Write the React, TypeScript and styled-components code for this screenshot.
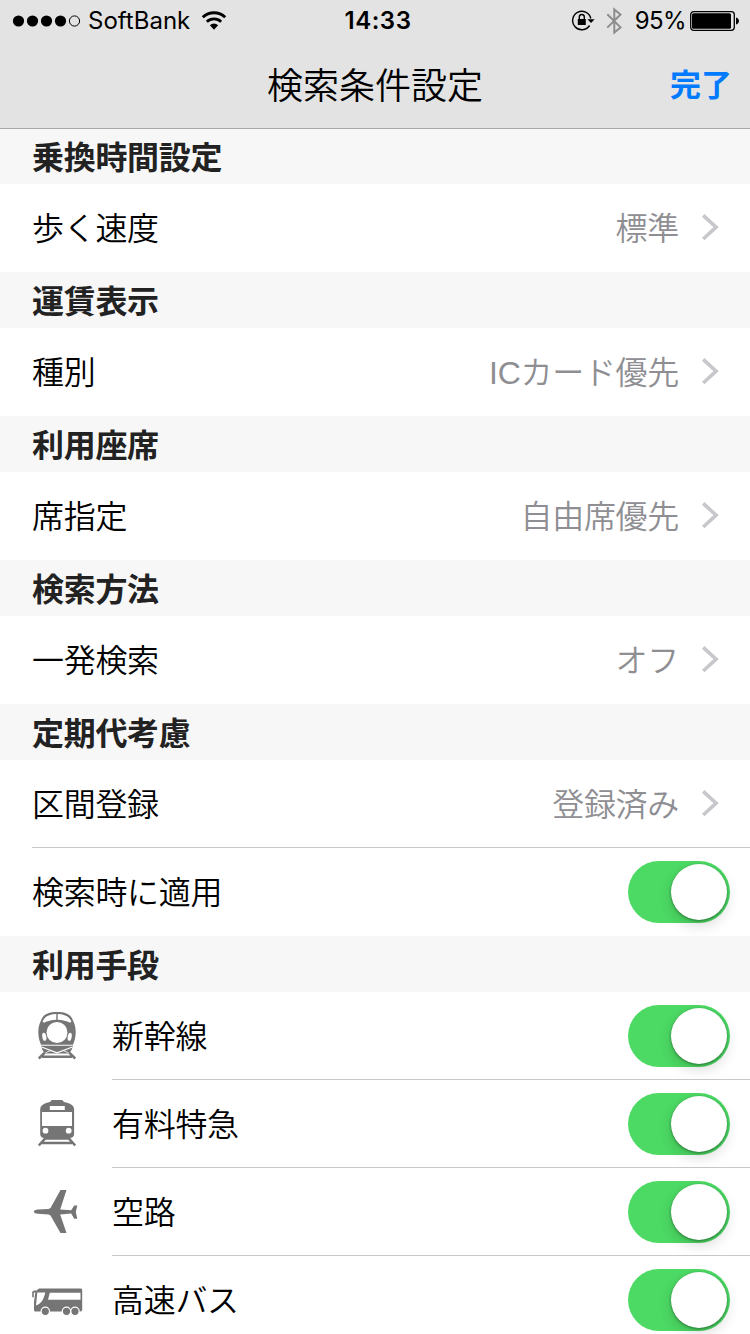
import React from "react";
import styled, { createGlobalStyle } from "styled-components";

const Global = createGlobalStyle`
  * { box-sizing: border-box; }
  html, body { margin: 0; padding: 0; background: #fff; }
  body {
    width: 750px;
    height: 1334px;
    overflow: hidden;
    font-family: Inter, "Noto Sans CJK JP", sans-serif;
    color: #000;
  }
`;

const Screen = styled.main`
  width: 750px;
  height: 1334px;
  overflow: hidden;
  display: flex;
  flex-direction: column;
  background: #fff;
`;

const Header = styled.header`
  flex: none;
  height: 129px;
  background: #e3e3e3;
  border-bottom: 1px solid #a9a9a9;
`;

const StatusBar = styled.div`
  height: 40px;
  display: grid;
  grid-template-columns: 1fr auto 1fr;
  align-items: center;
  padding: 0 11px 0 12px;
  font-size: 24px;
  line-height: 40px;
`;

const StatusGroup = styled.div<{ $end?: boolean }>`
  display: flex;
  align-items: center;
  height: 40px;
  justify-content: ${(p) => (p.$end ? "flex-end" : "flex-start")};
`;

const Carrier = styled.span`
  flex: none;
  margin: 1px 0 0 6px;
  width: 113px;
  font-size: 24px;
  letter-spacing: 0;
  white-space: nowrap;
`;

const Clock = styled.span`
  margin: 1px 0 0 5px;
  font-weight: 600;
  font-size: 24px;
  letter-spacing: 0.5px;
`;

const Percent = styled.span`
  margin: 1px 4px 0 12px;
  font-size: 24px;
  letter-spacing: -0.6px;
`;

const NavBar = styled.div`
  height: 88px;
  display: grid;
  grid-template-columns: 1fr auto 1fr;
  align-items: center;
  padding: 0 18px 2px;
`;

const Title = styled.h1`
  grid-column: 2;
  margin: 0;
  font-family: "Noto Sans CJK JP", sans-serif;
  font-size: 36px;
  font-weight: 350;
  line-height: 52px;
`;

const DoneButton = styled.button`
  justify-self: end;
  border: 0;
  padding: 0;
  background: none;
  color: #007aff;
  font-family: "Noto Sans CJK JP", sans-serif;
  font-size: 31px;
  font-weight: 700;
  line-height: 44px;
`;

const SectionHeader = styled.h2<{ $first?: boolean }>`
  flex: none;
  margin: 0;
  height: ${(p) => (p.$first ? 55 : 56)}px;
  padding: 0 32px;
  background: #f7f7f7;
  color: #222;
  font-family: "Noto Sans CJK JP", sans-serif;
  font-size: 32px;
  font-weight: 700;
  line-height: ${(p) => (p.$first ? 53 : 55)}px;
  letter-spacing: -0.3px;
`;

const Row = styled.div<{ $icon?: boolean }>`
  flex: none;
  height: 88px;
  display: flex;
  padding-left: ${(p) => (p.$icon ? 0 : 32)}px;
`;

const IconCell = styled.div`
  width: 112px;
  height: 88px;
  flex: none;
  svg { display: block; }
`;

const RowBody = styled.div<{ $line?: boolean; $toggle?: boolean }>`
  flex: 1;
  display: flex;
  align-items: center;
  justify-content: space-between;
  padding-right: ${(p) => (p.$toggle ? 20 : 31)}px;
  box-shadow: ${(p) => (p.$line ? "inset 0 -1px 0 #c8c7cc" : "none")};
`;

const Label = styled.span`
  margin-bottom: 4px;
  font-family: "Noto Sans CJK JP", sans-serif;
  font-size: 32px;
  font-weight: 350;
  line-height: 46px;
  letter-spacing: -0.3px;
`;

const Value = styled.span`
  display: flex;
  align-items: center;
  gap: 22px;
  color: #8e8e93;
  font-family: "Liberation Sans", "Noto Sans CJK JP", sans-serif;
  font-size: 32px;
  font-weight: 350;
  line-height: 46px;
  letter-spacing: -0.3px;
`;

const ValueText = styled.span`
  padding-top: 1px;
`;

const Switch = styled.span`
  display: flex;
  justify-content: flex-end;
  width: 102px;
  height: 62px;
  padding: 3px;
  border-radius: 31px;
  background: #4cd964;
`;

const Knob = styled.span`
  width: 56px;
  height: 56px;
  border-radius: 50%;
  background: #fff;
  box-shadow: 0 1px 3px rgba(0, 0, 0, 0.4), 0 6px 14px rgba(0, 0, 0, 0.14);
`;

const Signal = () => (
  <svg width="70" height="14" viewBox="0 0 70 14">
    {[6.5, 20.5, 34.5, 48.5].map((x) => (
      <circle key={x} cx={x} cy="7" r="5.6" />
    ))}
    <circle cx="62.5" cy="7" r="5.1" fill="none" stroke="#000" strokeWidth="1" />
  </svg>
);

const Wifi = () => (
  <svg width="26" height="20" viewBox="0 0 26 20" fill="none" stroke="#000">
    <path d="M1.8 6.3a16 16 0 0 1 22.4 0" strokeWidth="2.9" />
    <path d="M5.8 10.7a10.4 10.4 0 0 1 14.4 0" strokeWidth="2.7" />
    <path d="M13 18.700l-4.100-4.500a6 6 0 0 1 8.200 0z" fill="#000" stroke="none" />
  </svg>
);

const RotationLock = () => (
  <svg width="24" height="22" viewBox="0 0 24 22" fill="none" stroke="#000">
    <path d="M18.600 15.500A9.200 9.200 0 1 1 19.800 8.500" strokeWidth="1.400" />
    <path d="M16.400 9.200h7.200l-3.600 3.900z" fill="#000" stroke="none" />
    <rect x="6.800" y="8.900" width="8" height="6" rx=".5" fill="#000" stroke="none" />
    <path d="M8.300 9.200V7a2.500 2.500 0 0 1 5 0v2.200" strokeWidth="1.400" />
  </svg>
);

const BluetoothIcon = styled.svg`
  margin-left: 11px;
`;

const Bluetooth = () => (
  <BluetoothIcon width="17" height="28" viewBox="0 0 17 28" fill="none" stroke="#8d8d8d" strokeWidth="2">
    <path d="M1.300 7.300l13.200 13.100-6.200 5.200V2.400l6.200 5.100L1.300 20.600" />
  </BluetoothIcon>
);

const Battery = () => (
  <svg width="49" height="20" viewBox="0 0 49 20">
    <rect x=".7" y=".7" width="43.600" height="18.600" rx="3" fill="none" stroke="#000" strokeWidth="1.300" />
    <rect x="2" y="2.200" width="39" height="15.600" rx="1.500" />
    <path d="M46 6.500c4 1.200 4 5.800 0 7z" />
  </svg>
);

const Chevron = () => (
  <svg width="18" height="28" viewBox="0 0 18 28" fill="none" stroke="#c7c7cc" strokeWidth="3.600">
    <path d="M2.200 1.400L15.100 13.200 2.200 25" />
  </svg>
);

const Shinkansen = () => (
  <svg width="112" height="88" viewBox="0 0 112 88" fill="#757575">
    <path
      fillRule="evenodd"
      d="M57 20c-9 0-14 2.600-16 8.500-1.800 4-2.700 7-2.700 11.500 0 5 1.200 9.500 2.700 12.700h32c1.500-3.200 2.700-7.700 2.700-12.700 0-4.500-.9-7.500-2.700-11.500C71 22.600 66 20 57 20zM56.300 22v5.700c-5 .2-8.800 1.200-12.400 3l-1.300-1.200c2.200-4.800 6-7.200 13.700-7.500zM57.700 22c7.700.3 11.500 2.700 13.700 7.500l-1.300 1.200c-3.600-1.800-7.400-2.800-12.400-3z"
    />
    <circle cx="57" cy="40.500" r="10.500" fill="#fff" />
    <ellipse cx="44.300" cy="44.800" rx="2" ry="4" fill="#fff" transform="rotate(-10 44.300 44.800)" />
    <ellipse cx="69.700" cy="44.800" rx="2" ry="4" fill="#fff" transform="rotate(10 69.700 44.800)" />
    <path d="M41 53.800h32l-1.200 3.500L69.500 61.500h-25l-2.300-4.200z" />
    <path d="M41.500 55l15.500 5.800L72.500 55" fill="none" stroke="#fff" strokeWidth="1.300" />
    <path d="M45.500 60.800l6-2.600M68.500 60.800l-6-2.600" fill="none" stroke="#fff" strokeWidth=".8" />
    <path d="M44.500 60.800L38.800 66.500M69.500 60.800l5.700 5.700M42 64.800h30" fill="none" stroke="#757575" strokeWidth="2.500" />
  </svg>
);

const Express = () => (
  <svg width="112" height="88" viewBox="0 0 112 88" fill="#757575">
    <path
      fillRule="evenodd"
      d="M50 22l1.700-2h10.600l1.700 2c4.500.7 8 2.300 9.300 4.500.7 1.200.8 2 .8 4V54c0 2.600-1.800 4-4.500 4H44.700c-2.700 0-4.500-1.400-4.500-4V30.500c0-2 .1-2.800.8-4 1.500-2.200 4.500-3.800 9-4.500zM49.800 26v4h15v-4zM42 32v14h30V32zM45.500 47.800a2.900 2.900 0 1 0 0 5.800 2.900 2.900 0 0 0 0-5.800zM68.700 47.800a2.900 2.900 0 1 0 0 5.800 2.900 2.900 0 0 0 0-5.800z"
    />
    <path d="M44.800 58.800L38.800 65.500M69.200 58.800l6 6.700M42 63h30M44 58.600h26" fill="none" stroke="#757575" strokeWidth="2.500" />
  </svg>
);

const Plane = () => (
  <svg width="112" height="88" viewBox="0 0 112 88" fill="#757575">
    <path d="M60.500 22h6L60.200 41.500l11 .8 3-4.800h3.100l-1.500 6.400 1.500 6.800h-3.100l-3-5.200-11 .9L66.500 65h-6L50.500 47.500l-2-1.100-10.500-.6c-5.500-.4-5.500-4.100 0-4.400l10.500-.3 2-1.100z" />
  </svg>
);

const Bus = () => (
  <svg width="112" height="88" viewBox="0 0 112 88" fill="#757575">
    <path
      fillRule="evenodd"
      d="M37 34.500c.7-1.400 1.500-2 3.500-2h40c1.100 0 1.700.7 1.700 1.700v19.300c0 1.300-.7 2-2 2H35.800c-1.100 0-1.800-.5-1.800-1.800V46l1.300-9.500h-1.500v4.800h-1.600v-5.500L34 34.500zM37.300 36.500L36 49.500c5-1.500 8-6.500 9.300-13zM49.800 36.700l-1.800 7h32.500v-7z"
    />
    <g stroke="#fff" strokeWidth="1.200">
      <circle cx="45.300" cy="55.300" r="4.200" />
      <circle cx="66.500" cy="55.300" r="4.200" />
      <circle cx="75" cy="55.300" r="4.200" />
    </g>
  </svg>
);

const LinkRow = ({ label, value, line }: { label: string; value: string; line?: boolean }) => (
  <Row>
    <RowBody $line={line}>
      <Label>{label}</Label>
      <Value>
        <ValueText>{value}</ValueText>
        <Chevron />
      </Value>
    </RowBody>
  </Row>
);

const ToggleRow = ({ label, icon, line }: { label: string; icon?: React.ReactNode; line?: boolean }) => (
  <Row $icon={!!icon}>
    {icon && <IconCell>{icon}</IconCell>}
    <RowBody $toggle $line={line}>
      <Label>{label}</Label>
      <Switch role="switch" aria-checked="true">
        <Knob />
      </Switch>
    </RowBody>
  </Row>
);

export default function App() {
  return (
    <>
      <Global />
      <Screen>
        <Header>
          <StatusBar>
            <StatusGroup>
              <Signal />
              <Carrier>SoftBank</Carrier>
              <Wifi />
            </StatusGroup>
            <Clock>14:33</Clock>
            <StatusGroup $end>
              <RotationLock />
              <Bluetooth />
              <Percent>95%</Percent>
              <Battery />
            </StatusGroup>
          </StatusBar>
          <NavBar>
            <Title>検索条件設定</Title>
            <DoneButton>完了</DoneButton>
          </NavBar>
        </Header>
        <SectionHeader $first>乗換時間設定</SectionHeader>
        <LinkRow label="歩く速度" value="標準" />
        <SectionHeader>運賃表示</SectionHeader>
        <LinkRow label="種別" value="ICカード優先" />
        <SectionHeader>利用座席</SectionHeader>
        <LinkRow label="席指定" value="自由席優先" />
        <SectionHeader>検索方法</SectionHeader>
        <LinkRow label="一発検索" value="オフ" />
        <SectionHeader>定期代考慮</SectionHeader>
        <LinkRow label="区間登録" value="登録済み" line />
        <ToggleRow label="検索時に適用" />
        <SectionHeader>利用手段</SectionHeader>
        <ToggleRow label="新幹線" icon={<Shinkansen />} line />
        <ToggleRow label="有料特急" icon={<Express />} line />
        <ToggleRow label="空路" icon={<Plane />} line />
        <ToggleRow label="高速バス" icon={<Bus />} />
      </Screen>
    </>
  );
}
